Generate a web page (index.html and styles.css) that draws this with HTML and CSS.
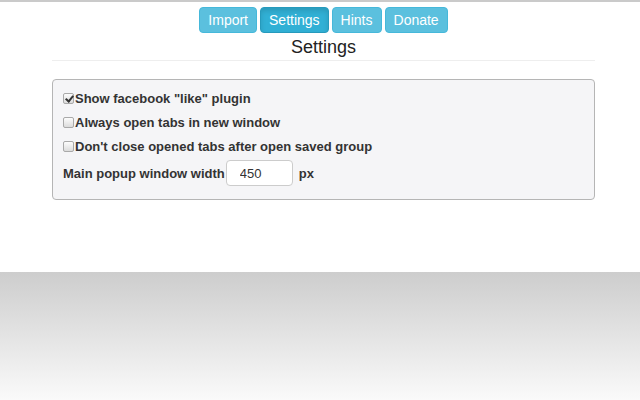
FILE: index.html
```html
<!DOCTYPE html>
<html>
<head>
<meta charset="utf-8">
<link rel="stylesheet" href="styles.css">
</head>
<body>
<div class="page">
  <nav class="tabs">
    <button class="btn">Import</button>
    <button class="btn active">Settings</button>
    <button class="btn">Hints</button>
    <button class="btn">Donate</button>
  </nav>
  <h1 class="title">Settings</h1>
  <div class="panel">
    <label class="row"><input type="checkbox" class="cb" checked>Show facebook "like" plugin</label>
    <label class="row"><input type="checkbox" class="cb">Always open tabs in new window</label>
    <label class="row"><input type="checkbox" class="cb">Don't close opened tabs after open saved group</label>
    <div class="row width-row">Main popup window width <input type="text" class="num" value="450"> px</div>
  </div>
</div>
<div class="shade"></div>
</body>
</html>
```
FILE: styles.css
```css
html, body {
  margin: 0;
  padding: 0;
}
body {
  font-family: "Liberation Sans", Arial, sans-serif;
  color: #333;
  background: #fafafa;
}
.page {
  box-sizing: border-box;
  height: 272px;
  background: #fff;
  border-top: 2px solid #cacaca;
  padding: 5px 45px 0 52px;
}
.tabs {
  display: flex;
  justify-content: center;
  gap: 3px;
}
.btn {
  font-family: "Liberation Sans", Arial, sans-serif;
  font-size: 14px;
  height: 26px;
  padding: 0 8px;
  color: #fff;
  background: #5bc0de;
  border: 1px solid #46b8da;
  border-radius: 4px;
}
.btn.active {
  background: #31b0d5;
  border-color: #269abc;
  box-shadow: inset 0 3px 5px rgba(0,0,0,0.125);
}
.title {
  margin: 4px 0 0;
  font-size: 18px;
  font-weight: normal;
  text-align: center;
  color: #222;
  line-height: 21px;
  padding-bottom: 2px;
  border-bottom: 1px solid #eee;
}
.panel {
  margin-top: 18px;
  border: 1px solid #b5b5b5;
  border-radius: 4px;
  background: #f5f5f7;
  padding: 6px 9px 12px;
  display: flex;
  flex-direction: column;
}
.row {
  display: flex;
  align-items: center;
  height: 24px;
  font-size: 13px;
  font-weight: bold;
  color: #333;
}
.cb {
  appearance: none;
  -webkit-appearance: none;
  position: relative;
  box-sizing: border-box;
  margin: 0 1px 0 1px;
  width: 11px;
  height: 11px;
  border: 1px solid #a9a9a9;
  border-radius: 2px;
  background: linear-gradient(#fcfcfc, #dcdcdc);
}
.cb:checked::after {
  content: "";
  position: absolute;
  left: 3px;
  top: 0px;
  width: 3px;
  height: 6px;
  border: solid #333;
  border-width: 0 2px 2px 0;
  transform: rotate(40deg);
}
.width-row {
  height: 28px;
  margin-top: 1px;
  padding-left: 1px;
}
.num {
  box-sizing: border-box;
  margin: 0 6px 0 1px;
  width: 67px;
  height: 26px;
  padding: 0 6px 0 13px;
  border: 1px solid #ccc;
  border-radius: 4px;
  font-family: "Liberation Sans", Arial, sans-serif;
  font-size: 13px;
  color: #333;
  background: #fff;
}
.shade {
  height: 128px;
  background: linear-gradient(#cdcdcd, #fafafa);
}
```
